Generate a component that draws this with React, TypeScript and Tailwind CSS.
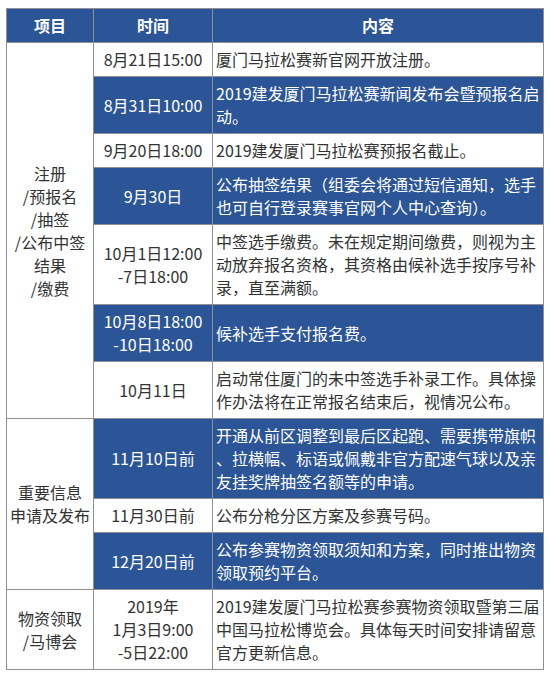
import React from "react";

type Row = { time: string[]; content: string; blue: boolean };
type Group = { label: string[]; rows: Row[] };

const groups: Group[] = [
  {
    label: ["注册", "/预报名", "/抽签", "/公布中签", "结果", "/缴费"],
    rows: [
      { time: ["8月21日15:00"], content: "厦门马拉松赛新官网开放注册。", blue: false },
      { time: ["8月31日10:00"], content: "2019建发厦门马拉松赛新闻发布会暨预报名启动。", blue: true },
      { time: ["9月20日18:00"], content: "2019建发厦门马拉松赛预报名截止。", blue: false },
      { time: ["9月30日"], content: "公布抽签结果（组委会将通过短信通知，选手也可自行登录赛事官网个人中心查询）。", blue: true },
      { time: ["10月1日12:00", "-7日18:00"], content: "中签选手缴费。未在规定期间缴费，则视为主动放弃报名资格，其资格由候补选手按序号补录，直至满额。", blue: false },
      { time: ["10月8日18:00", "-10日18:00"], content: "候补选手支付报名费。", blue: true },
      { time: ["10月11日"], content: "启动常住厦门的未中签选手补录工作。具体操作办法将在正常报名结束后，视情况公布。", blue: false },
    ],
  },
  {
    label: ["重要信息", "申请及发布"],
    rows: [
      { time: ["11月10日前"], content: "开通从前区调整到最后区起跑、需要携带旗帜、拉横幅、标语或佩戴非官方配速气球以及亲友挂奖牌抽签名额等的申请。", blue: true },
      { time: ["11月30日前"], content: "公布分枪分区方案及参赛号码。", blue: false },
      { time: ["12月20日前"], content: "公布参赛物资领取须知和方案，同时推出物资领取预约平台。", blue: true },
    ],
  },
  {
    label: ["物资领取", "/马博会"],
    rows: [
      { time: ["2019年", "1月3日9:00", "-5日22:00"], content: "2019建发厦门马拉松赛参赛物资领取暨第三届中国马拉松博览会。具体每天时间安排请留意官方更新信息。", blue: false },
    ],
  },
];

const cell = "border border-[#8e9096] px-[3px] py-[5px] leading-[23px] text-[16px]";

export default function App() {
  return (
    <div
      className="w-[550px] h-[680px] bg-white pt-[8px] pl-[6px]"
      style={{ fontFamily: '"Noto Sans CJK SC", "Noto Sans", sans-serif' }}
    >
      <table className="w-[537px] table-fixed border-collapse">
        <colgroup>
          <col className="w-[87px]" />
          <col className="w-[119px]" />
          <col className="w-[331px]" />
        </colgroup>
        <thead>
          <tr className="bg-[#2c5597] text-white">
            <th className={`${cell} font-bold text-center`}>项目</th>
            <th className={`${cell} font-bold text-center`}>时间</th>
            <th className={`${cell} font-bold text-center`}>内容</th>
          </tr>
        </thead>
        <tbody>
          {groups.map((g, gi) =>
            g.rows.map((r, ri) => (
              <tr key={`${gi}-${ri}`}>
                {ri === 0 && (
                  <td rowSpan={g.rows.length} className={`${cell} bg-white text-[#333333] text-center align-middle`}>
                    {g.label.map((l, li) => (
                      <div key={li}>{l}</div>
                    ))}
                  </td>
                )}
                <td
                  className={`${cell} text-center align-middle ${
                    r.blue ? "bg-[#2c5597] text-white" : "bg-white text-[#333333]"
                  }`}
                >
                  {r.time.map((t, ti) => (
                    <div key={ti}>{t}</div>
                  ))}
                </td>
                <td
                  className={`${cell} text-left align-middle [line-break:anywhere] ${
                    r.blue ? "bg-[#2c5597] text-white" : "bg-white text-[#333333]"
                  }`}
                >
                  {r.content}
                </td>
              </tr>
            ))
          )}
        </tbody>
      </table>
    </div>
  );
}
